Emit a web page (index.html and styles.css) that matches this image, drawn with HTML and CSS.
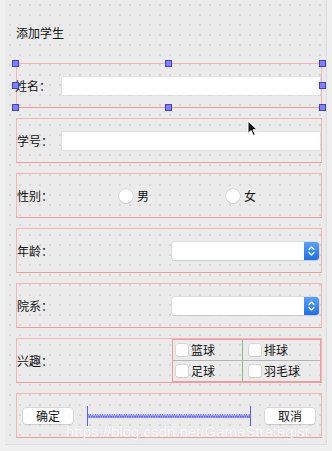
FILE: index.html
```html
<!DOCTYPE html>
<html lang="zh">

<head>
    <meta charset="UTF-8">
    <meta name="viewport" content="width=device-width, initial-scale=1.0">
    <title>添加学生</title>
    <link rel="stylesheet" href="styles.css">
</head>

<body>
    <div class="form">
        <div class="title">添加学生</div>

        <!-- 当前选中的行 -->
        <div class="row selected">
            <span class="row-label">姓名：</span>
            <div class="line-edit"></div>
            <i class="handle h-tl"></i>
            <i class="handle h-tm"></i>
            <i class="handle h-tr"></i>
            <i class="handle h-ml"></i>
            <i class="handle h-mr"></i>
            <i class="handle h-bl"></i>
            <i class="handle h-bm"></i>
            <i class="handle h-br"></i>
        </div>

        <div class="row">
            <span class="row-label">学号：</span>
            <div class="line-edit"></div>
        </div>

        <div class="row">
            <span class="row-label">性别：</span>
            <div class="radio-group">
                <label class="radio"><span class="radio-dot"></span>男</label>
                <label class="radio"><span class="radio-dot"></span>女</label>
            </div>
        </div>

        <div class="row">
            <span class="row-label">年龄：</span>
            <div class="combo">
                <span class="combo-btn">
                    <svg width="15" height="18" viewBox="0 0 15 18">
                        <path d="M5 7.5 L7.5 5 L10 7.5 M5 10.5 L7.5 13 L10 10.5" fill="none" stroke="#fff" stroke-width="1.3" stroke-linecap="round" stroke-linejoin="round" />
                    </svg>
                </span>
            </div>
        </div>

        <div class="row">
            <span class="row-label">院系：</span>
            <div class="combo">
                <span class="combo-btn">
                    <svg width="15" height="18" viewBox="0 0 15 18">
                        <path d="M5 7.5 L7.5 5 L10 7.5 M5 10.5 L7.5 13 L10 10.5" fill="none" stroke="#fff" stroke-width="1.3" stroke-linecap="round" stroke-linejoin="round" />
                    </svg>
                </span>
            </div>
        </div>

        <div class="row">
            <span class="row-label">兴趣：</span>
            <div class="hobby">
                <label class="check c1 r1"><span class="box"></span>篮球</label>
                <label class="check c2 r1"><span class="box"></span>排球</label>
                <label class="check c1"><span class="box"></span>足球</label>
                <label class="check c2"><span class="box"></span>羽毛球</label>
            </div>
        </div>

        <div class="row buttons">
            <span class="btn">确定</span>
            <svg class="spacer" width="164" height="20" viewBox="0 0 164 20">
                <defs>
                    <pattern id="spring" width="2.4" height="20" patternUnits="userSpaceOnUse">
                        <path d="M0 12 L1.2 8 L2.4 12" fill="none" stroke="#5c5cff" stroke-width="0.8" />
                    </pattern>
                </defs>
                <rect x="1" y="8" width="162" height="4.5" fill="url(#spring)" />
                <line x1="1" y1="11" x2="163" y2="11" stroke="#5c5cff" stroke-width="0.8" />
                <line x1="0.5" y1="0" x2="0.5" y2="20" stroke="#5c5cff" stroke-width="1" />
                <line x1="163.5" y1="0" x2="163.5" y2="20" stroke="#5c5cff" stroke-width="1" />
            </svg>
            <span class="btn">取消</span>
        </div>

        <svg class="cursor" width="12" height="17" viewBox="0 0 12 17">
            <path d="M1 1 L1 13.5 L4 10.5 L6.3 15.5 L8.3 14.6 L6 9.8 L10.2 9.8 Z" fill="#111" stroke="#fff" stroke-width="1" stroke-linejoin="round" />
        </svg>

        <div class="watermark">https://blog.csdn.net/GameStrategist</div>
    </div>
</body>

</html>
```

FILE: styles.css
```css
body {
    margin: 0;
    background: #efefef;
    font-family: "Noto Sans CJK SC", "Liberation Sans", sans-serif;
    font-size: 12px;
    color: #111;
}

.form {
    position: relative;
    box-sizing: border-box;
    margin-left: 5px;
    width: 322px;
    height: 445px;
    padding-left: 11px;
    background-color: #ebebeb;
    background-image: radial-gradient(circle, #d0d0d0 0.6px, transparent 1px);
    background-size: 10px 10px;
    border-right: 1px solid #dedede;
    border-bottom: 1px solid #dedede;
}

.title {
    box-sizing: border-box;
    height: 63px;
    padding-top: 25px;
    line-height: 16px;
}

.row {
    position: relative;
    box-sizing: border-box;
    display: flex;
    align-items: center;
    width: 306px;
    height: 45px;
    margin-bottom: 10px;
    border: 1px solid #f4b4b4;
    border-bottom-color: #ef9c9c;
}

.row-label {
    width: 45px;
    flex-shrink: 0;
    line-height: 16px;
}

.selected .row-label {
    margin-left: -2px;
    width: 47px;
}

.line-edit {
    flex: 1;
    height: 18px;
    margin-right: 1px;
    background: #fff;
    box-shadow: 0 0 0 0.5px #d6d6d6;
}

/* 选中控件的八个手柄 */
.handle {
    position: absolute;
    width: 5px;
    height: 5px;
    background: #8080ff;
    border: 1px solid #4040c0;
}

.h-tl { left: -5px; top: -4px; }
.h-tm { left: 148px; top: -4px; }
.h-tr { right: -5px; top: -4px; }
.h-ml { left: -5px; top: 18px; }
.h-mr { right: -5px; top: 18px; }
.h-bl { left: -5px; bottom: -4px; }
.h-bm { left: 148px; bottom: -4px; }
.h-br { right: -5px; bottom: -4px; }

.radio-group {
    display: flex;
    padding-left: 57px;
}

.radio {
    display: flex;
    align-items: center;
    width: 107px;
}

.radio-dot {
    width: 14px;
    height: 14px;
    margin-right: 4px;
    border-radius: 50%;
    background: #fff;
    box-shadow: 0 0 0 0.5px #c4c4c4, 0 1px 1px rgba(0, 0, 0, 0.12);
}

.combo {
    position: relative;
    margin-left: auto;
    margin-right: 2px;
    width: 147px;
    height: 18px;
    border-radius: 3px;
    background: #fff;
    box-shadow: 0 0 0 0.5px #cfcfcf, 0 1px 1px rgba(0, 0, 0, 0.15);
}

.combo-btn {
    position: absolute;
    right: 0;
    top: 0;
    width: 15px;
    height: 18px;
    border-radius: 0 3px 3px 0;
    background: linear-gradient(#5aa2f8, #1f6fe6);
}

.combo-btn svg {
    display: block;
}

.hobby {
    align-self: stretch;
    margin-left: auto;
    display: grid;
    grid-template-columns: 70px 77px;
    grid-template-rows: 1fr 1fr;
    border: 1px solid #ee9c9c;
}

.check {
    display: flex;
    align-items: center;
}

.check.c1 {
    padding-left: 3px;
    border-right: 1px solid #7cc77c;
}

.check.c2 {
    padding-left: 6px;
}

.check.r1 {
    border-bottom: 1px solid #b4b4b4;
}

.box {
    width: 12px;
    height: 12px;
    margin-right: 3px;
    border-radius: 2px;
    background: #fff;
    box-shadow: 0 0 0 0.5px #c4c4c4, 0 1px 1px rgba(0, 0, 0, 0.1);
}

.buttons {
    padding-left: 6px;
}

.btn {
    width: 50px;
    height: 16px;
    line-height: 16px;
    text-align: center;
    border-radius: 3px;
    background: #fff;
    box-shadow: 0 0 0 0.5px #c6c6c6, 0 1px 1px rgba(0, 0, 0, 0.12);
}

.spacer {
    display: block;
    margin: 0 14px;
}

.cursor {
    position: absolute;
    left: 242px;
    top: 120px;
}

.watermark {
    position: absolute;
    left: 61px;
    top: 424px;
    font-family: "Liberation Sans", sans-serif;
    font-size: 15px;
    line-height: 16px;
    color: rgba(255, 255, 255, 0.95);
    text-shadow: 0 0 1px rgba(0, 0, 0, 0.12);
}
```
